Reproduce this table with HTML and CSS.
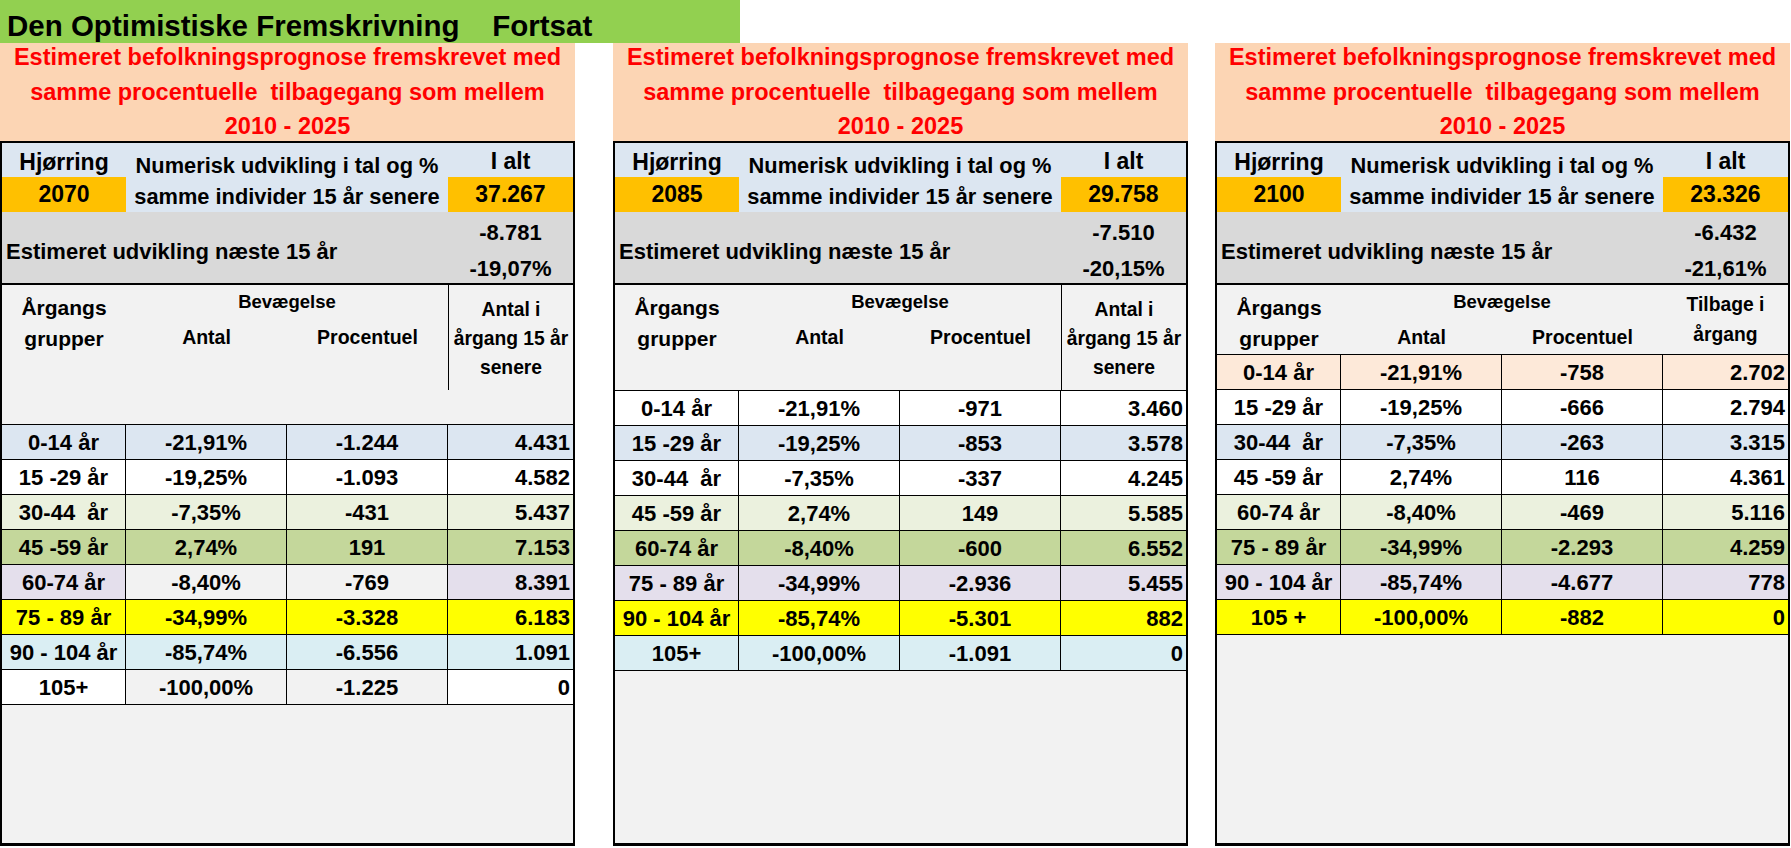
FILE: index.html
```html
<!DOCTYPE html>
<html lang="da">
<head>
<meta charset="utf-8">
<title>Den Optimistiske Fremskrivning Fortsat</title>
<link rel="stylesheet" href="styles.css">
</head>
<body>
<div class="titlebar">Den Optimistiske Fremskrivning&nbsp;&nbsp;&nbsp; Fortsat</div>
<div class="panels">

  <section class="panel">
    <div class="prognose"><p>Estimeret befolkningsprognose fremskrevet med<br>samme procentuelle&nbsp; tilbagegang som mellem<br>2010 - 2025</p></div>
    <div class="box">
      <div class="top">
        <div class="c-kom">Hjørring</div>
        <div class="c-num">Numerisk udvikling i tal og %<br>samme individer 15 år senere</div>
        <div class="c-ialt">I alt</div>
        <div class="c-year">2070</div>
        <div class="c-total">37.267</div>
      </div>
      <div class="estimate">
        <div class="est-label">Estimeret udvikling næste 15 år</div>
        <div class="est-values">-8.781<br>-19,07%</div>
      </div>
      <div class="colhead colhead-l">
        <div class="h-group">Årgangs<br>grupper</div>
        <div class="h-move"><div class="h-move-title">Bevægelse</div><div class="h-move-sub"><span>Antal</span><span>Procentuel</span></div></div>
        <div class="h-last h-last-line">Antal i<br>årgang 15 år<br>senere</div>
      </div>
      <div class="rows">
        <div class="row blue"><div>0-14 år</div><div>-21,91%</div><div>-1.244</div><div>4.431</div></div>
        <div class="row white"><div>15 -29 år</div><div>-19,25%</div><div>-1.093</div><div>4.582</div></div>
        <div class="row lgreen"><div>30-44&nbsp; år</div><div>-7,35%</div><div>-431</div><div>5.437</div></div>
        <div class="row green"><div>45 -59 år</div><div>2,74%</div><div>191</div><div>7.153</div></div>
        <div class="row lav"><div>60-74 år</div><div class="grey">-8,40%</div><div class="grey">-769</div><div>8.391</div></div>
        <div class="row yellow"><div>75 - 89 år</div><div>-34,99%</div><div>-3.328</div><div>6.183</div></div>
        <div class="row cyan"><div>90 - 104 år</div><div>-85,74%</div><div>-6.556</div><div>1.091</div></div>
        <div class="row white"><div>105+</div><div class="grey">-100,00%</div><div class="grey">-1.225</div><div>0</div></div>
      </div>
    </div>
  </section>

  <section class="panel panel-2">
    <div class="prognose"><p>Estimeret befolkningsprognose fremskrevet med<br>samme procentuelle&nbsp; tilbagegang som mellem<br>2010 - 2025</p></div>
    <div class="box">
      <div class="top">
        <div class="c-kom">Hjørring</div>
        <div class="c-num">Numerisk udvikling i tal og %<br>samme individer 15 år senere</div>
        <div class="c-ialt">I alt</div>
        <div class="c-year">2085</div>
        <div class="c-total">29.758</div>
      </div>
      <div class="estimate">
        <div class="est-label">Estimeret udvikling næste 15 år</div>
        <div class="est-values">-7.510<br>-20,15%</div>
      </div>
      <div class="colhead colhead-m">
        <div class="h-group">Årgangs<br>grupper</div>
        <div class="h-move"><div class="h-move-title">Bevægelse</div><div class="h-move-sub"><span>Antal</span><span>Procentuel</span></div></div>
        <div class="h-last h-last-line">Antal i<br>årgang 15 år<br>senere</div>
      </div>
      <div class="rows">
        <div class="row white"><div>0-14 år</div><div>-21,91%</div><div>-971</div><div>3.460</div></div>
        <div class="row blue"><div>15 -29 år</div><div>-19,25%</div><div>-853</div><div>3.578</div></div>
        <div class="row white"><div>30-44&nbsp; år</div><div>-7,35%</div><div>-337</div><div>4.245</div></div>
        <div class="row lgreen"><div>45 -59 år</div><div>2,74%</div><div>149</div><div>5.585</div></div>
        <div class="row green"><div>60-74 år</div><div>-8,40%</div><div>-600</div><div>6.552</div></div>
        <div class="row lav"><div>75 - 89 år</div><div>-34,99%</div><div>-2.936</div><div>5.455</div></div>
        <div class="row yellow"><div>90 - 104 år</div><div>-85,74%</div><div>-5.301</div><div>882</div></div>
        <div class="row cyan"><div>105+</div><div>-100,00%</div><div>-1.091</div><div>0</div></div>
      </div>
    </div>
  </section>

  <section class="panel panel-3">
    <div class="prognose"><p>Estimeret befolkningsprognose fremskrevet med<br>samme procentuelle&nbsp; tilbagegang som mellem<br>2010 - 2025</p></div>
    <div class="box">
      <div class="top">
        <div class="c-kom">Hjørring</div>
        <div class="c-num">Numerisk udvikling i tal og %<br>samme individer 15 år senere</div>
        <div class="c-ialt">I alt</div>
        <div class="c-year">2100</div>
        <div class="c-total">23.326</div>
      </div>
      <div class="estimate">
        <div class="est-label">Estimeret udvikling næste 15 år</div>
        <div class="est-values">-6.432<br>-21,61%</div>
      </div>
      <div class="colhead colhead-s">
        <div class="h-group">Årgangs<br>grupper</div>
        <div class="h-move"><div class="h-move-title">Bevægelse</div><div class="h-move-sub"><span>Antal</span><span>Procentuel</span></div></div>
        <div class="h-last h-last-short">Tilbage i<br>årgang</div>
      </div>
      <div class="rows">
        <div class="row peach"><div>0-14 år</div><div>-21,91%</div><div>-758</div><div>2.702</div></div>
        <div class="row white"><div>15 -29 år</div><div>-19,25%</div><div>-666</div><div>2.794</div></div>
        <div class="row blue"><div>30-44&nbsp; år</div><div>-7,35%</div><div>-263</div><div>3.315</div></div>
        <div class="row white"><div>45 -59 år</div><div>2,74%</div><div>116</div><div>4.361</div></div>
        <div class="row lgreen"><div>60-74 år</div><div>-8,40%</div><div>-469</div><div>5.116</div></div>
        <div class="row green"><div>75 - 89 år</div><div>-34,99%</div><div>-2.293</div><div>4.259</div></div>
        <div class="row lav"><div>90 - 104 år</div><div>-85,74%</div><div>-4.677</div><div>778</div></div>
        <div class="row yellow"><div>105 +</div><div>-100,00%</div><div>-882</div><div>0</div></div>
      </div>
    </div>
  </section>

</div>
</body>
</html>
```

FILE: styles.css
```css
* { box-sizing: border-box; }

html, body {
  margin: 0;
  padding: 0;
  background: #ffffff;
}

body {
  font-family: "Liberation Sans", Arial, sans-serif;
  font-weight: bold;
  color: #000000;
  overflow: hidden;
}

.titlebar {
  width: 740px;
  height: 43px;
  background: #92d050;
  font-size: 29.5px;
  line-height: 51px;
  padding-left: 7px;
  white-space: nowrap;
}

.panels {
  display: flex;
  align-items: flex-start;
}

.panel {
  width: 575px;
  flex: 0 0 575px;
  display: flex;
  flex-direction: column;
}

.panel-2 { margin-left: 38px; }
.panel-3 { margin-left: 27px; }

.prognose {
  height: 98px;
  background: #fcd5b4;
  display: flex;
  align-items: center;
  justify-content: center;
}

.prognose p {
  margin: 0;
  color: #ff0000;
  font-size: 23.5px;
  line-height: 34.5px;
  text-align: center;
  white-space: nowrap;
}

.box {
  height: 705px;
  border: 2px solid #000000;
  border-bottom-width: 3px;
  background: #f2f2f2;
  display: flex;
  flex-direction: column;
}

/* top section */
.top {
  display: grid;
  grid-template-columns: 124px 322px 1fr;
  grid-template-rows: 34px 35px;
  background: #dce6f1;
  font-size: 23px;
  text-align: center;
}

.c-kom { grid-area: 1 / 1; line-height: 34px; padding-top: 2px; }
.c-ialt { grid-area: 1 / 3; line-height: 34px; padding-top: 1px; }
.c-year { grid-area: 2 / 1; background: #ffc000; line-height: 35px; }
.c-total { grid-area: 2 / 3; background: #ffc000; line-height: 35px; }
.c-num {
  grid-area: 1 / 2 / 3 / 3;
  font-size: 21.8px;
  line-height: 31px;
  padding-top: 7px;
  white-space: nowrap;
}

/* estimate */
.estimate {
  height: 73px;
  background: #d9d9d9;
  border-bottom: 2px solid #000000;
  display: grid;
  grid-template-columns: 1fr 125px;
  align-items: center;
  font-size: 22px;
}

.est-label {
  padding-left: 4px;
  padding-top: 5px;
  line-height: 30px;
  white-space: nowrap;
}

.est-values {
  text-align: center;
  line-height: 36px;
  padding-top: 3px;
}

/* column head */
.colhead {
  display: grid;
  grid-template-columns: 124px 322px 1fr;
  align-items: start;
}

.colhead-l { height: 139px; }
.colhead-m { height: 105px; }
.colhead-s { height: 69px; }

.h-group {
  font-size: 21px;
  line-height: 31px;
  padding-top: 7px;
  text-align: center;
}

.h-move { text-align: center; }

.h-move-title {
  font-size: 18.5px;
  line-height: 34px;
}

.h-move-sub {
  display: grid;
  grid-template-columns: 1fr 1fr;
  font-size: 19.5px;
  line-height: 36px;
}

.h-last {
  font-size: 19.3px;
  text-align: center;
  white-space: nowrap;
}

.h-last-line {
  height: 105px;
  border-left: 1px solid #000000;
  line-height: 29px;
  padding-top: 10px;
}

.h-last-short {
  line-height: 30px;
  padding-top: 5px;
}

/* data rows */
.rows {
  border-top: 1px solid #000000;
}

.row {
  display: grid;
  grid-template-columns: 124px 161px 161px 1fr;
  height: 35px;
  border-bottom: 1px solid #000000;
  font-size: 22px;
}

.row > div {
  line-height: 32px;
  padding-top: 2px;
  text-align: center;
  white-space: nowrap;
  border-right: 1px solid #000000;
}

.row > div:last-child {
  border-right: none;
  text-align: right;
  padding-right: 3px;
}

.row.white { background: #ffffff; }
.row.blue { background: #dce6f1; }
.row.lgreen { background: #ebf1de; }
.row.green { background: #c4d79b; }
.row.lav { background: #e4dfec; }
.row.yellow { background: #ffff00; }
.row.cyan { background: #daeef3; }
.row.peach { background: #fde9d9; }
.row > .grey { background: #f2f2f2; }
```
